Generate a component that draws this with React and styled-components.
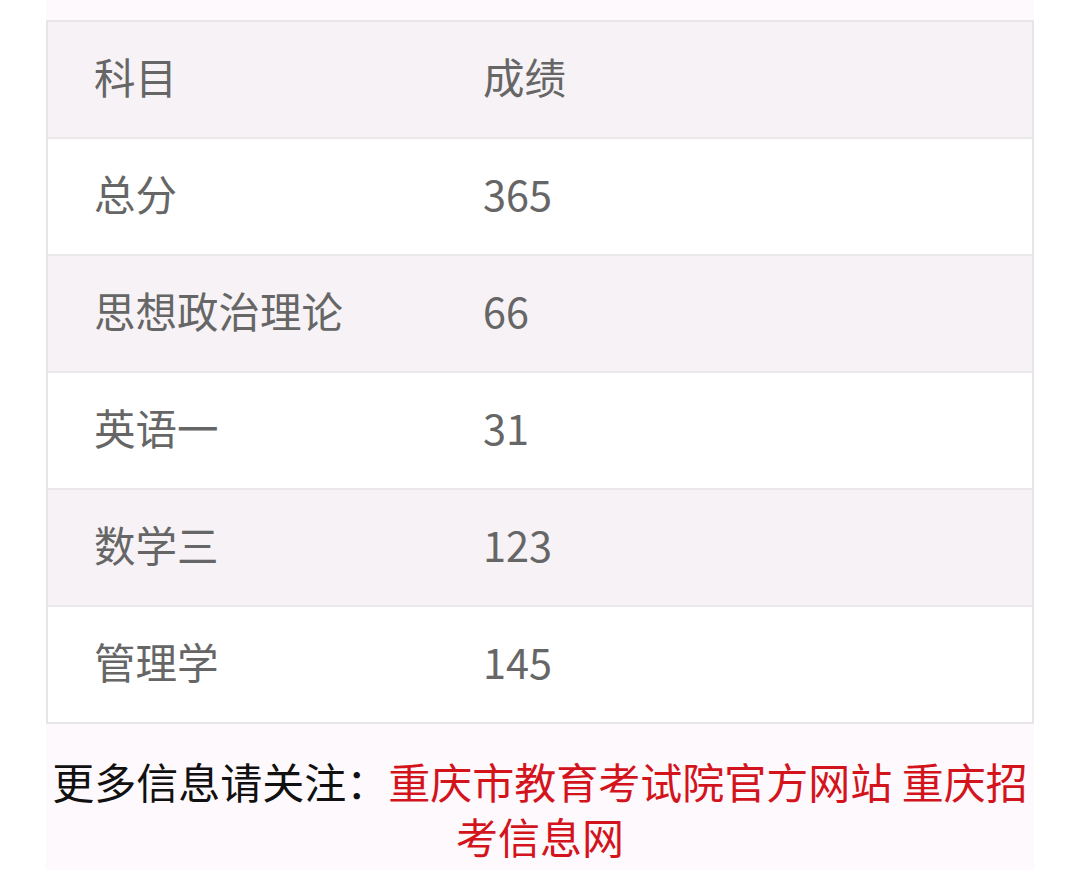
import React from 'react';
import styled, { createGlobalStyle } from 'styled-components';

const GlobalStyle = createGlobalStyle`
  html, body {
    margin: 0;
    padding: 0;
    background: #ffffff;
  }
  body {
    font-family: "Noto Sans CJK SC", "Noto Sans", sans-serif;
  }
`;

const Page = styled.div`
  width: 1080px;
  height: 870px;
  background: #ffffff;
  display: flex;
  justify-content: center;
`;

const Sheet = styled.div`
  width: 988px;
  background: #fdf9fc;
  padding-top: 20px;
  display: flex;
  flex-direction: column;
`;

const Table = styled.div`
  border: 2px solid #e8e5e8;
  display: flex;
  flex-direction: column;
`;

const Row = styled.div`
  display: grid;
  grid-template-columns: 389px 1fr;
  height: 115px;
  align-items: center;
  background: ${(p) => (p.$shaded ? '#f6f2f5' : '#ffffff')};
  border-top: ${(p) => (p.$first ? 'none' : '2px solid #ebe8eb')};
  color: #666666;
  font-size: 41.5px;
`;

const Cell = styled.div`
  padding-left: 46px;
  padding-bottom: 7px;
  white-space: nowrap;
`;

const Footer = styled.p`
  margin: 0;
  padding: 29px 0 0;
  text-align: center;
  font-size: 42px;
  line-height: 55px;
  color: #111111;
`;

const Red = styled.span`
  color: #d3141c;
`;

const rows = [
  ['科目', '成绩'],
  ['总分', '365'],
  ['思想政治理论', '66'],
  ['英语一', '31'],
  ['数学三', '123'],
  ['管理学', '145'],
];

export default function App() {
  return (
    <>
      <GlobalStyle />
      <Page>
        <Sheet>
          <Table>
            {rows.map(([name, score], i) => (
              <Row key={name} $shaded={i % 2 === 0} $first={i === 0}>
                <Cell>{name}</Cell>
                <Cell>{score}</Cell>
              </Row>
            ))}
          </Table>
          <Footer>
            更多信息请关注：<Red>重庆市教育考试院官方网站 重庆招考信息网</Red>
          </Footer>
        </Sheet>
      </Page>
    </>
  );
}
